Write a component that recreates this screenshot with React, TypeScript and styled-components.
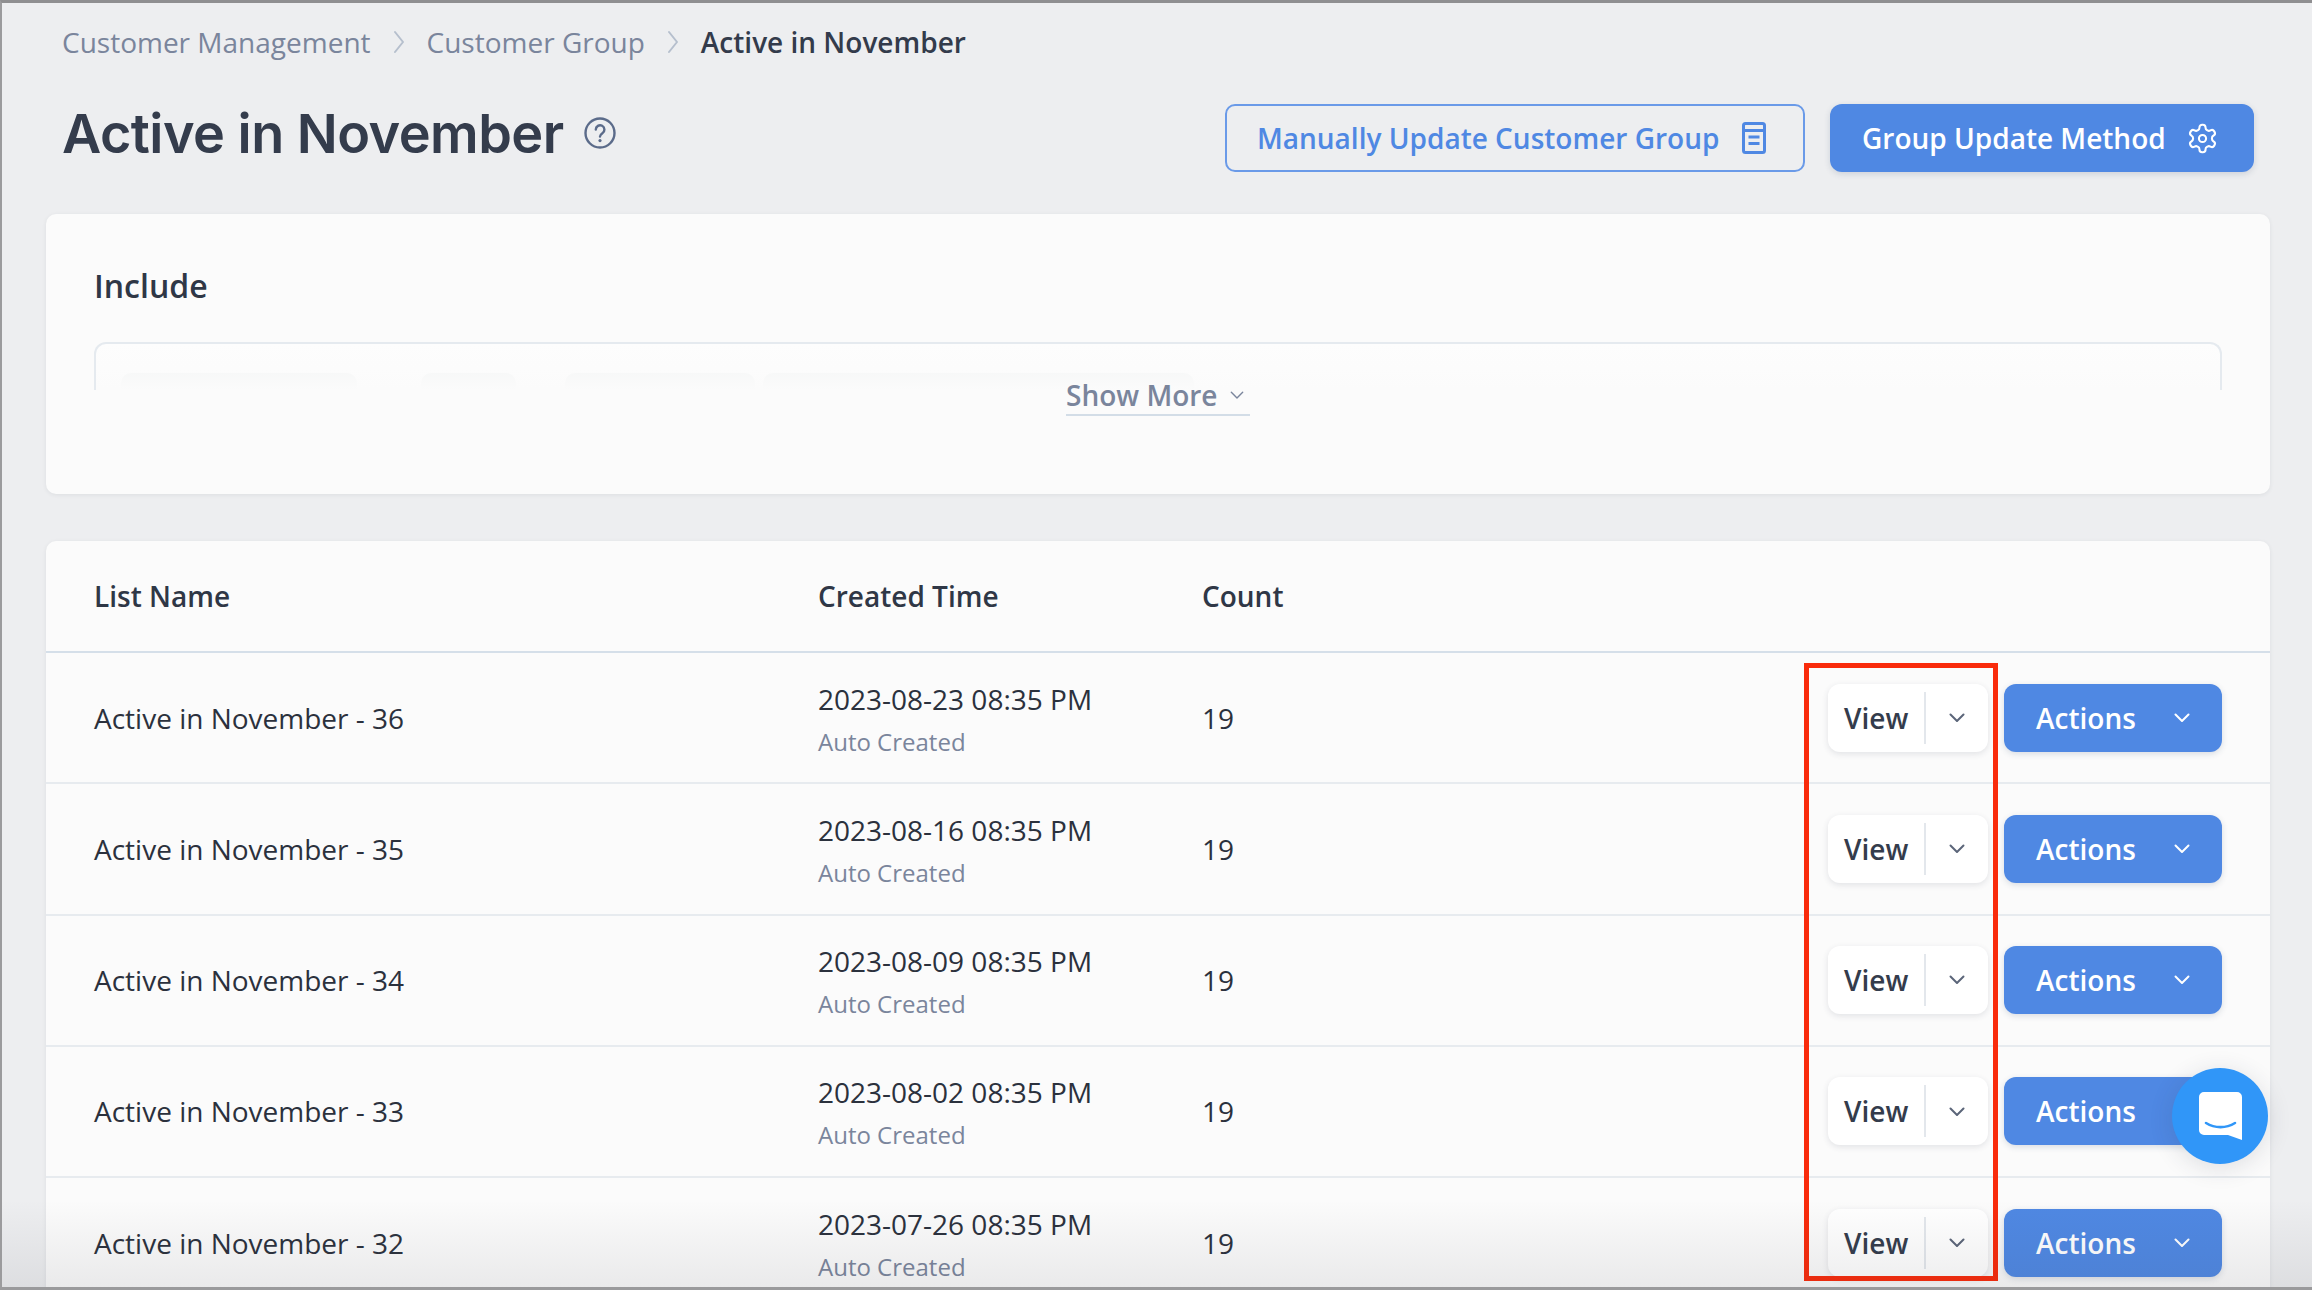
import React from 'react';
import styled, { createGlobalStyle } from 'styled-components';

const rows = [
  { name: 'Active in November - 36', time: '2023-08-23 08:35 PM' },
  { name: 'Active in November - 35', time: '2023-08-16 08:35 PM' },
  { name: 'Active in November - 34', time: '2023-08-09 08:35 PM' },
  { name: 'Active in November - 33', time: '2023-08-02 08:35 PM' },
  { name: 'Active in November - 32', time: '2023-07-26 08:35 PM' },
];

const Chevron = ({ size = 16, color = 'currentColor', width = 2 }: { size?: number; color?: string; width?: number }) => (
  <svg width={size} height={size * 0.6} viewBox="0 0 16 9.6" fill="none">
    <path d="M1.5 1.5 8 8l6.5-6.5" stroke={color} strokeWidth={width} strokeLinecap="round" strokeLinejoin="round" />
  </svg>
);

const Separator = () => (
  <svg width="12" height="24" viewBox="0 0 12 24" fill="none">
    <path d="M2 2l8 10-8 10" stroke="#b6bfcd" strokeWidth="2" strokeLinecap="round" strokeLinejoin="round" />
  </svg>
);

const HelpIcon = () => (
  <svg width="32" height="32" viewBox="0 0 32 32" fill="none">
    <circle cx="16" cy="16" r="14.5" stroke="#5b6b8a" strokeWidth="2.4" />
    <path d="M11.8 12.6a4.3 4.3 0 1 1 6.6 3.6c-1.5 1-2.4 1.8-2.4 3.4" stroke="#5b6b8a" strokeWidth="2.4" strokeLinecap="round" />
    <circle cx="16" cy="23.6" r="1.6" fill="#5b6b8a" />
  </svg>
);

const SheetIcon = () => (
  <svg width="24" height="32" viewBox="0 0 24 32" fill="none">
    <rect x="1.5" y="1.5" width="21" height="29" rx="2" stroke="#4f88e3" strokeWidth="3" />
    <path d="M2 8.5h20M6.5 15h11M6.5 21.5h11" stroke="#4f88e3" strokeWidth="3" />
  </svg>
);

const GearIcon = () => (
  <svg width="35" height="33" viewBox="0 0 24 24" fill="none" stroke="#fff" strokeWidth="1.5" strokeLinecap="round" strokeLinejoin="round">
    <path d="M12.22 2h-.44a2 2 0 0 0-2 2v.18a2 2 0 0 1-1 1.73l-.43.25a2 2 0 0 1-2 0l-.15-.08a2 2 0 0 0-2.73.73l-.22.38a2 2 0 0 0 .73 2.73l.15.1a2 2 0 0 1 1 1.72v.51a2 2 0 0 1-1 1.74l-.15.09a2 2 0 0 0-.73 2.73l.22.38a2 2 0 0 0 2.73.73l.15-.08a2 2 0 0 1 2 0l.43.25a2 2 0 0 1 1 1.73V20a2 2 0 0 0 2 2h.44a2 2 0 0 0 2-2v-.18a2 2 0 0 1 1-1.73l.43-.25a2 2 0 0 1 2 0l.15.08a2 2 0 0 0 2.73-.73l.22-.39a2 2 0 0 0-.73-2.73l-.15-.08a2 2 0 0 1-1-1.74v-.5a2 2 0 0 1 1-1.74l.15-.09a2 2 0 0 0 .73-2.73l-.22-.38a2 2 0 0 0-2.73-.73l-.15.08a2 2 0 0 1-2 0l-.43-.25a2 2 0 0 1-1-1.73V4a2 2 0 0 0-2-2z" />
    <circle cx="12" cy="12" r="2.6" />
  </svg>
);

const ChatIcon = () => (
  <svg width="43" height="48" viewBox="0 0 43 48" fill="none">
    <path d="M5 0h33a5 5 0 0 1 5 5v43l-14-5H5a5 5 0 0 1-5-5V5a5 5 0 0 1 5-5z" fill="#fff" />
    <path d="M7 31c9 5.500 20 5.500 29 0" stroke="#3096f8" strokeWidth="2.6" strokeLinecap="round" />
  </svg>
);

const App = () => (
  <Page>
    <GlobalStyle />
    <Breadcrumb>
      <Crumb>Customer Management</Crumb>
      <Separator />
      <Crumb>Customer Group</Crumb>
      <Separator />
      <Crumb $current>Active in November</Crumb>
    </Breadcrumb>
    <Header>
      <TitleGroup>
        <Title>Active in November</Title>
        <HelpIcon />
      </TitleGroup>
      <HeaderActions>
        <OutlineButton>
          Manually Update Customer Group
          <SheetIcon />
        </OutlineButton>
        <PrimaryButton>
          Group Update Method
          <GearIcon />
        </PrimaryButton>
      </HeaderActions>
    </Header>
    <IncludeCard>
      <IncludeTitle>Include</IncludeTitle>
      <ConditionBox>
        <ConditionChip $width={236} $gap={0} />
        <ConditionChip $width={95} $gap={64} />
        <ConditionChip $width={190} $gap={49} />
        <ConditionChip $width={431} $gap={8} />
        <BoxFade />
      </ConditionBox>
      <ShowMore>
        Show More
        <Chevron size={14} width={1.6} color="#7a859c" />
      </ShowMore>
    </IncludeCard>
    <TableCard>
      <HeadRow>
        <HeadCell>List Name</HeadCell>
        <HeadCell>Created Time</HeadCell>
        <HeadCell>Count</HeadCell>
      </HeadRow>
      {rows.map((row) => (
        <Row key={row.name}>
          <NameCell>{row.name}</NameCell>
          <TimeCell>
            <TimeText>{row.time}</TimeText>
            <TimeNote>Auto Created</TimeNote>
          </TimeCell>
          <NameCell>19</NameCell>
          <RowActions>
            <ViewButton>
              <ViewLabel>View</ViewLabel>
              <ViewDivider />
              <ViewArrow>
                <Chevron size={16} color="#5b6579" />
              </ViewArrow>
            </ViewButton>
            <ActionsButton>
              Actions
              <Chevron size={16} color="#fff" />
            </ActionsButton>
          </RowActions>
        </Row>
      ))}
    </TableCard>
    <Highlight />
    <ChatBubble>
      <ChatIcon />
    </ChatBubble>
    <BottomShade />
  </Page>
);

export default App;

const GlobalStyle = createGlobalStyle`
  html, body {
    margin: 0;
    padding: 0;
    height: 100%;
    overflow: hidden;
  }

  * {
    box-sizing: border-box;
  }
`;

const Page = styled.div`
  position: relative;
  width: 2312px;
  height: 1290px;
  overflow: hidden;
  padding: 0 42px 0 44px;
  background-color: #edeef0;
  border-top: 3px solid #8f8f91;
  border-left: 2px solid #9b9b9d;
  font-family: 'Open Sans', 'Liberation Sans', sans-serif;
  color: #2f3746;
`;

const Breadcrumb = styled.nav`
  display: flex;
  align-items: center;
  gap: 22px;
  height: 44px;
  margin-top: 17px;
  padding-left: 16px;
`;

const Crumb = styled.span<{ $current?: boolean }>`
  font-size: 28px;
  font-weight: ${(p) => (p.$current ? 600 : 400)};
  color: ${(p) => (p.$current ? '#333b4b' : '#7a859c')};
`;

const Header = styled.header`
  display: flex;
  justify-content: space-between;
  align-items: center;
  height: 68px;
  margin-top: 40px;
  padding: 0 16px;
`;

const TitleGroup = styled.div`
  display: flex;
  align-items: center;
  gap: 20px;
  margin-top: -10px;
`;

const Title = styled.h1`
  margin: 0;
  font-family: Inter, 'Liberation Sans', sans-serif;
  font-size: 54px;
  font-weight: 600;
  letter-spacing: -0.01em;
  color: #343c4c;
`;

const HeaderActions = styled.div`
  display: flex;
  gap: 25px;
`;

const OutlineButton = styled.button`
  display: flex;
  align-items: center;
  justify-content: space-between;
  width: 580px;
  height: 68px;
  padding: 0 37px 0 30px;
  border: 2px solid #6a9ae8;
  border-radius: 10px;
  background: transparent;
  font-family: inherit;
  font-size: 28px;
  font-weight: 600;
  color: #4f88e3;
`;

const PrimaryButton = styled.button`
  display: flex;
  align-items: center;
  justify-content: space-between;
  width: 424px;
  height: 68px;
  padding: 0 34px 0 32px;
  border: 0;
  border-radius: 12px;
  background-color: #4f88e3;
  box-shadow: 0 2px 6px rgba(40, 60, 100, 0.16);
  font-family: inherit;
  font-size: 28px;
  font-weight: 600;
  color: #fff;
`;

const IncludeCard = styled.section`
  position: relative;
  height: 280px;
  margin-top: 42px;
  padding: 50px 48px 0;
  border-radius: 10px;
  background-color: #fbfbfb;
  box-shadow: 0 1px 4px rgba(40, 50, 70, 0.08);
`;

const IncludeTitle = styled.h2`
  margin: 0;
  height: 44px;
  line-height: 44px;
  font-size: 32px;
  font-weight: 600;
  color: #2f3746;
`;

const ConditionBox = styled.div`
  position: relative;
  display: flex;
  height: 48px;
  margin-top: 34px;
  padding: 29px 0 0 25px;
  overflow: hidden;
  border: 2px solid #e5eaef;
  border-bottom: 0;
  border-radius: 12px 12px 0 0;
  background-color: #fdfdfd;
`;

const ConditionChip = styled.div<{ $width: number; $gap: number }>`
  flex: none;
  width: ${(p) => p.$width}px;
  height: 40px;
  margin-left: ${(p) => p.$gap}px;
  border-radius: 10px;
  background-color: #f1f3f3;
`;

const BoxFade = styled.div`
  position: absolute;
  inset: 0;
  background: linear-gradient(to bottom, rgba(251, 251, 251, 0), #fbfbfb 100%);
`;

const ShowMore = styled.button`
  position: absolute;
  left: 1020px;
  top: 162px;
  display: flex;
  align-items: center;
  justify-content: space-between;
  width: 184px;
  height: 40px;
  padding: 0 6px 0 0;
  border: 0;
  border-bottom: 2px solid #d3dde7;
  background: transparent;
  font-family: inherit;
  font-size: 28px;
  font-weight: 600;
  color: #7a859c;
`;

const TableCard = styled.section`
  margin-top: 47px;
  border-radius: 10px 10px 0 0;
  background-color: #fbfbfb;
  box-shadow: 0 1px 4px rgba(40, 50, 70, 0.08);
`;

const HeadRow = styled.div`
  display: grid;
  grid-template-columns: 724px 384px 1fr;
  align-items: center;
  height: 112px;
  padding-left: 48px;
  border-bottom: 2px solid #d5dfe9;
`;

const HeadCell = styled.div`
  font-size: 28px;
  font-weight: 600;
  color: #2f3746;
`;

const Row = styled.div`
  display: grid;
  grid-template-columns: 724px 384px 1fr auto;
  align-items: center;
  height: 131.25px;
  padding: 0 48px;
  border-bottom: 2px solid #e7ebef;
`;

const NameCell = styled.div`
  font-size: 28px;
  color: #2b313d;
`;

const TimeCell = styled.div`
  display: flex;
  flex-direction: column;
  gap: 6px;
  margin-top: 2px;
`;

const TimeText = styled.div`
  font-size: 28px;
  line-height: 40px;
  color: #2b313d;
`;

const TimeNote = styled.div`
  font-size: 24px;
  line-height: 34px;
  color: #7a859c;
`;

const RowActions = styled.div`
  display: flex;
  gap: 16px;
`;

const ViewButton = styled.div`
  display: flex;
  align-items: center;
  width: 160px;
  height: 68px;
  border-radius: 12px;
  background-color: #fff;
  box-shadow: 0 2px 6px rgba(40, 50, 70, 0.12);
`;

const ViewLabel = styled.span`
  width: 96px;
  padding-left: 16px;
  font-size: 28px;
  font-weight: 600;
  color: #343c4c;
`;

const ViewDivider = styled.span`
  width: 2px;
  height: 52px;
  background-color: #e3e7ec;
`;

const ViewArrow = styled.span`
  display: flex;
  flex: 1;
  justify-content: center;
`;

const ActionsButton = styled.div`
  display: flex;
  align-items: center;
  justify-content: space-between;
  width: 218px;
  height: 68px;
  padding: 0 32px;
  border-radius: 12px;
  background-color: #4f88e3;
  box-shadow: 0 2px 6px rgba(40, 60, 100, 0.16);
  font-size: 28px;
  font-weight: 600;
  color: #fff;
`;

const Highlight = styled.div`
  position: absolute;
  left: 1802px;
  top: 660px;
  width: 194px;
  height: 618px;
  border: 5px solid #f92b0b;
`;

const ChatBubble = styled.div`
  position: absolute;
  left: 2170px;
  top: 1065px;
  display: flex;
  align-items: center;
  justify-content: center;
  width: 96px;
  height: 96px;
  border-radius: 50%;
  background-color: #3096f8;
  box-shadow: 0 4px 24px rgba(40, 50, 70, 0.14);
`;

const BottomShade = styled.div`
  position: absolute;
  left: 0;
  right: 0;
  bottom: 0;
  height: 90px;
  border-bottom: 3px solid #9a9a9c;
  background: linear-gradient(to bottom, rgba(60, 60, 70, 0), rgba(60, 60, 70, 0.09));
  pointer-events: none;
`;
